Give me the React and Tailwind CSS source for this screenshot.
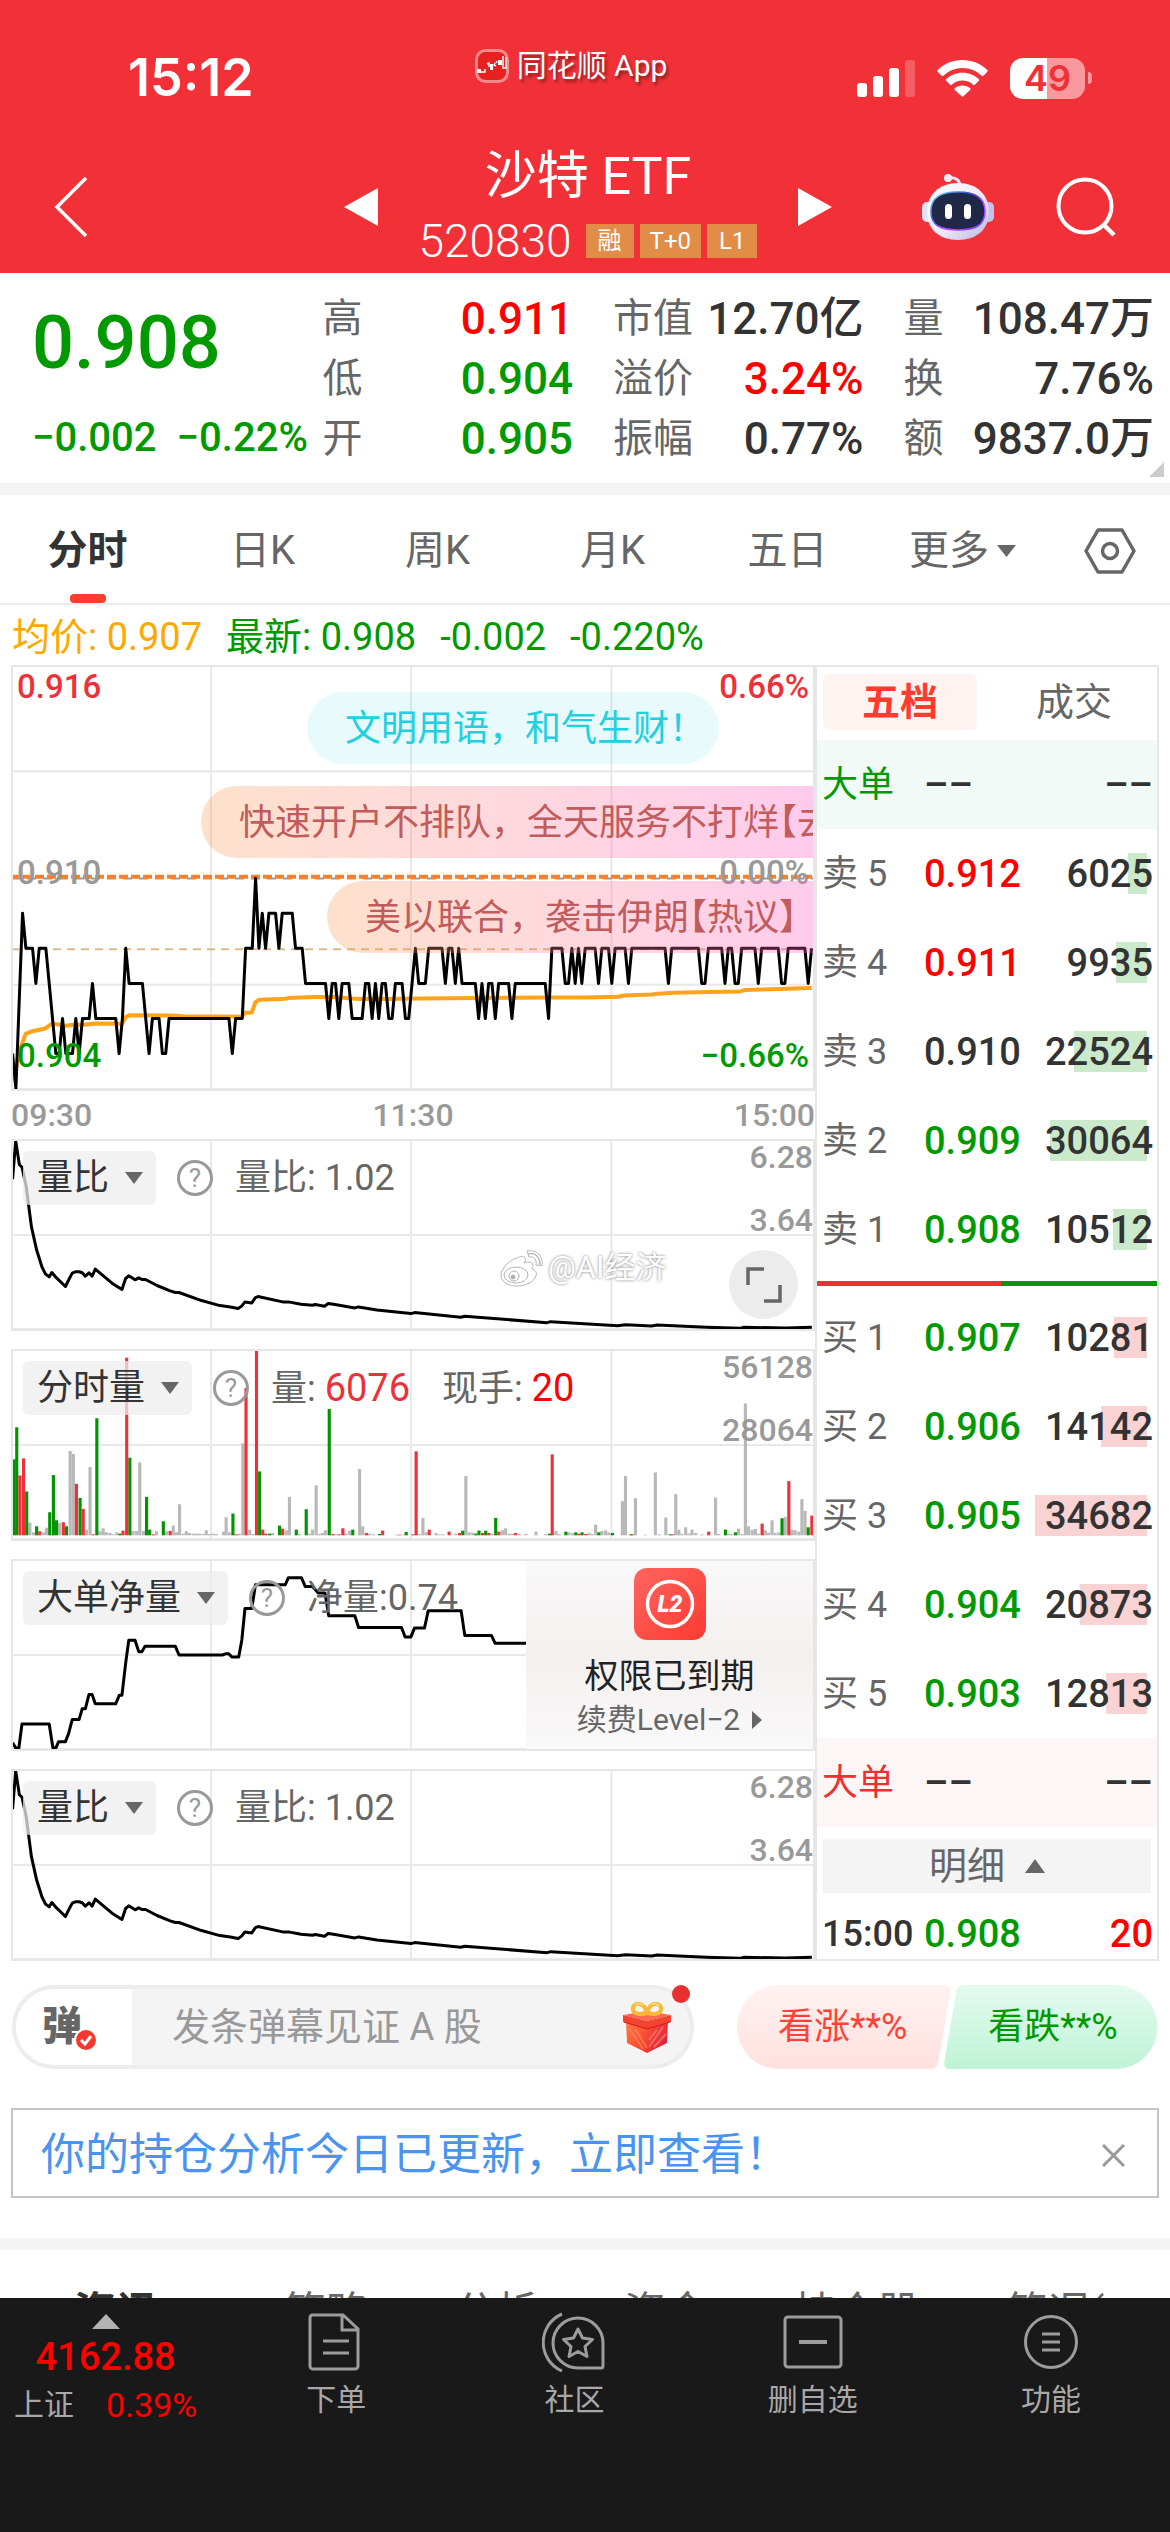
import { Fragment } from "react";

const PRICE_TICKS =
  "0:5 1:4 3:9 4:8 6:8 7:7 8:8 10:8 11:7 13:5 14:5 15:6 16:5 18:5 19:6 20:5 21:6 23:6 24:7 25:6 31:6 32:5 33:6 34:8 35:7 39:7 41:5 42:6 44:6 45:5 46:5 47:6 65:6 66:5 67:6 69:6 70:8 72:8 73:10 74:8 75:9 76:8 77:9 79:9 80:8 81:9 84:9 85:8 87:8 88:7 94:7 95:6 96:7 97:7 98:6 99:7 101:7 102:6 105:6 106:7 107:7 108:6 109:7 110:6 111:7 112:7 113:6 114:6 115:7 117:7 118:6 119:6 121:8 122:7 124:7 125:8 129:8 130:7 131:8 132:8 133:7 134:8 135:7 139:7 140:6 141:7 142:6 143:7 144:7 145:6 146:7 149:7 150:6 151:7 160:7 161:6 162:8 165:8 166:7 167:7 168:8 169:7 170:8 171:7 172:8 175:8 176:7 177:8 179:8 180:7 181:8 184:8 185:7 186:8 196:8 197:7 198:8 206:8 207:7 208:7 209:8 213:8 214:7 215:8 216:8 217:7 218:7 219:8 223:8 224:7 225:8 230:8 231:7 232:7 233:8 238:8 239:7 240:8";

const pricePoints = PRICE_TICKS.split(" ")
  .map((pair) => {
    const [minute, tick] = pair.split(":").map(Number);
    return `${24 + minute * 6.36},${684 + (10 - tick) * 105}`;
  })
  .join(" ");

const AVERAGE =
  "27,1290 33,1230 42,1180 49,1150 62,1142 86,1134 99,1120 112,1122 125,1126 144,1122 160,1123 182,1119 233,1120 240,1100 248,1094 330,1095 350,1097 440,1098 462,1099 468,1087 481,1086 488,1055 495,1048 540,1046 551,1043 600,1040 640,1040 670,1044 690,1046 720,1045 740,1046 800,1044 980,1042 1050,1041 1120,1041 1182,1039 1192,1035 1245,1032 1255,1030 1290,1027 1350,1025 1415,1023 1422,1019 1551,1013";

const RATIO =
  "24,178 30,64 37,135 42,142 50,200 60,320 70,390 80,440 87,462 94,470 99,457 106,470 125,499 131,480 138,459 144,455 151,455 157,458 163,468 170,458 176,468 182,447 214,489 233,508 240,475 246,467 258,479 265,473 271,478 278,478 300,496 325,512 335,517 342,517 385,541 420,556 440,560 455,565 462,557 468,545 481,548 488,532 493,529 540,545 551,545 575,552 597,555 602,553 620,558 627,550 640,553 678,563 685,560 720,569 785,580 792,577 880,591 888,588 1045,607 1052,604 1180,616 1195,613 1245,617 1255,614 1350,621 1415,624 1420,621 1500,623 1551,621";

const NET =
  "24,607 30,623 36,623 42,551 94,551 101,622 107,622 112,604 125,604 131,580 138,538 151,538 157,506 163,506 170,463 176,463 182,491 221,491 228,465 233,465 240,370 246,301 258,301 265,335 271,335 277,319 335,319 342,345 425,345 432,341 437,341 443,351 456,351 462,300 468,206 481,206 488,135 545,135 551,114 576,114 583,140 597,140 608,160 621,160 628,228 678,228 685,263 767,263 774,291 785,291 792,264 811,264 818,213 881,213 888,287 939,287 946,310 1006,310";

// x:height pairs, grouped by bar direction
const VOLUME = {
  "#b8b8b8":
    "57:38 64:9 83:9 89:23 114:37 134:252 140:243 165:17 172:204 191:12 197:21 203:9 210:7 216:3 223:9 254:13 261:13 267:218 274:13 299:12 318:12 331:29 337:9 343:93 350:5 356:12 362:7 369:5 375:5 381:5 388:4 394:15 400:4 407:5 413:4 427:11 432:54 438:9 457:5 464:275 477:17 483:4 521:7 547:15 553:115 572:4 591:5 597:17 604:149 610:4 616:7 622:15 642:3 661:5 668:14 687:198 693:27 706:5 713:3 757:2 770:2 801:4 808:52 814:9 833:7 839:3 846:3 871:5 890:177 896:9 903:8 941:4 960:15 966:21 973:5 979:4 992:4 1005:4 1024:11 1043:4 1062:13 1068:4 1087:9 1094:6 1125:7 1131:4 1138:32 1150:13 1157:15 1163:9 1189:102 1195:177 1214:111 1233:2 1252:188 1259:3 1272:53 1291:123 1297:17 1303:4 1310:24 1316:5 1322:17 1329:7 1341:3 1367:113 1373:4 1392:5 1398:4 1411:20 1418:4 1424:394 1430:27 1437:17 1443:19 1449:5 1462:15 1468:8 1475:45 1481:7 1488:9 1500:55 1513:17 1519:15 1526:11 1532:108 1538:73",
  "#009400":
    "27:227 32:323 51:131 70:27 95:69 102:180 108:45 127:27 153:112 185:350 229:5 248:232 280:115 286:17 312:42 445:65 496:191 515:5 534:29 566:17 585:78 629:378 674:17 725:4 776:10 884:14 909:5 915:14 928:14 947:52 1050:5 1081:11 1100:9 1112:9 1144:9 1170:7 1205:3 1280:3 1386:17 1405:9 1494:51 1544:24",
  "#ef3038":
    "38:179 45:230 76:12 121:39 146:154 159:79 178:3 235:14 242:531 293:3 325:13 451:3 470:440 490:555 502:17 508:5 540:20 636:4 648:3 655:21 700:7 731:14 763:2 789:3 795:251 820:17 858:11 878:7 922:7 934:7 953:11 985:7 1055:242 1106:5 1119:4 1208:3 1285:3 1354:11 1456:35 1507:162 1551:59",
};

const quotes = [
  [
    ["高", "0.911", "text-[#ff0000]"],
    ["低", "0.904", "text-[#009900]"],
    ["开", "0.905", "text-[#009900]"],
  ],
  [
    ["市值", "12.70亿", "text-[#333333]"],
    ["溢价", "3.24%", "text-[#ff0000]"],
    ["振幅", "0.77%", "text-[#333333]"],
  ],
  [
    ["量", "108.47万", "text-[#333333]"],
    ["换", "7.76%", "text-[#333333]"],
    ["额", "9837.0万", "text-[#333333]"],
  ],
];

const sells = [
  ["卖 5", "0.912", "6025", 19, "text-[#ff0000]"],
  ["卖 4", "0.911", "9935", 31, "text-[#ff0000]"],
  ["卖 3", "0.910", "22524", 73, "text-[#333333]"],
  ["卖 2", "0.909", "30064", 97, "text-[#009900]"],
  ["卖 1", "0.908", "10512", 34, "text-[#009900]"],
];

const buys = [
  ["买 1", "0.907", "10281", 33, "text-[#009900]"],
  ["买 2", "0.906", "14142", 46, "text-[#009900]"],
  ["买 3", "0.905", "34682", 112, "text-[#009900]"],
  ["买 4", "0.904", "20873", 67, "text-[#009900]"],
  ["买 5", "0.903", "12813", 41, "text-[#009900]"],
];

function AppLogo() {
  return (
    <svg width="34" height="34" viewBox="0 0 34 34" aria-hidden="true">
      <rect x="1.5" y="1.5" width="31" height="31" rx="9" fill="#e6211f" stroke="#f58a8c" strokeWidth="3" />
      <path d="M2 20h4v4H2zM15 15h3v6h-3zM23 11h4v5h-4z" fill="#fff" />
      <path d="M6 23h4v-3M12 15l2-1v4M28 7v12h3V8M20 14l-1 2 2 1M22 12l-1 2" stroke="#fff" strokeWidth="1.400" fill="none" />
    </svg>
  );
}

function StatusIcons() {
  return (
    <div className="flex items-center gap-[22px]">
      <svg width="58" height="38" viewBox="0 0 58 38" fill="#fff" aria-hidden="true">
        <rect x="0" y="24" width="10" height="14" rx="3" />
        <rect x="16" y="17" width="10" height="21" rx="3" />
        <rect x="32" y="9" width="10" height="29" rx="3" />
        <rect x="48" y="1" width="10" height="37" rx="3" opacity="0.22" />
      </svg>
      <svg width="51" height="38" viewBox="0 0 51 38" fill="#fff" aria-hidden="true">
        <path d="M25.500 1c9.500 0 18.400 3.500 24.800 10 .5.500.5 1.200 0 1.700l-3.900 4c-.5.500-1.200.5-1.700 0A27.500 27.500 0 0 0 25.500 9 27.500 27.500 0 0 0 6.300 16.700c-.5.500-1.200.5-1.700 0l-3.900-4c-.5-.5-.5-1.200 0-1.700C7.100 4.500 16 1 25.500 1z" />
        <path d="M25.500 13.700c6.300 0 12 2.400 16.300 6.300.5.500.5 1.200 0 1.700l-4 4c-.5.500-1.200.5-1.700 0a15.800 15.800 0 0 0-21.200 0c-.5.500-1.200.5-1.700 0l-4-4c-.5-.5-.5-1.200 0-1.700 4.300-3.900 10-6.300 16.300-6.300z" />
        <path d="M25.500 26.600c2.900 0 5.500 1 7.600 2.700.5.400.5 1.200.1 1.600l-6.900 6.400c-.5.500-1.100.5-1.600 0l-6.900-6.400c-.4-.5-.4-1.200.1-1.600 2.100-1.700 4.700-2.700 7.600-2.700z" />
      </svg>
      <div className="flex items-center gap-[3px]">
        <div className="flex h-[41px] w-[75px] items-center justify-center rounded-[13px] bg-linear-to-r from-white from-49% to-[#f8999d] to-49% text-4xl leading-none font-semibold text-[#f23038]">
          49
        </div>
        <div className="h-3 w-1 rounded-r-full bg-[#f8999d]" />
      </div>
    </div>
  );
}

function Robot() {
  return (
    <svg width="72" height="68" viewBox="0 0 72 68" aria-hidden="true">
      <defs>
        <linearGradient id="shell" x1="0" y1="0" x2="1" y2="1">
          <stop offset="0" stopColor="#ffffff" />
          <stop offset="0.55" stopColor="#eceaf8" />
          <stop offset="1" stopColor="#b9b5e0" />
        </linearGradient>
        <linearGradient id="rim" x1="0" y1="0" x2="1" y2="1">
          <stop offset="0" stopColor="#5fe6ff" />
          <stop offset="0.35" stopColor="#3558c8" />
          <stop offset="0.65" stopColor="#c445ff" />
          <stop offset="1" stopColor="#5a4bff" />
        </linearGradient>
      </defs>
      <path d="M26 5c8-1 12 2 12 9" fill="none" stroke="#e6e4f6" strokeWidth="3" />
      <circle cx="26" cy="5" r="4" fill="#f1effb" />
      <rect x="0" y="29" width="11" height="20" rx="5" fill="#e4e2f4" />
      <rect x="61" y="29" width="11" height="20" rx="5" fill="#c4c1ea" />
      <path d="M36 10C17 10 5 22 5 39s12 28 31 28 31-11 31-28-12-29-31-29z" fill="url(#shell)" />
      <path d="M36 19c-17 0-27 5-27 19s9 19 27 19 27-5 27-19-10-19-27-19z" fill="#1f2847" stroke="url(#rim)" strokeWidth="1.600" />
      <rect x="23" y="31" width="7" height="15" rx="3.500" fill="#fff" />
      <rect x="42" y="31" width="7" height="15" rx="3.500" fill="#fff" />
    </svg>
  );
}

function Header() {
  return (
    <header className="relative bg-[#f23038] text-white">
      <div className="absolute inset-x-0 top-[46px] flex items-center justify-center gap-2 pr-7 text-[30px] leading-10 text-shadow-[2px_3px_3px_rgb(0_0_0/0.4)]">
        <AppLogo />
        <span>同花顺 App</span>
      </div>
      <div className="flex h-[140px] items-center justify-between pt-4 pr-[78px] pl-[128px] font-['Inter','Noto_Sans_CJK_SC',sans-serif]">
        <span className="text-[52px] leading-none font-semibold">15:12</span>
        <StatusIcons />
      </div>
      <div className="grid h-[133px] grid-cols-[1fr_488px_1fr] items-center pl-1.5">
        <div className="pl-12">
          <button aria-label="返回" className="block">
            <svg width="34" height="60" viewBox="0 0 34 60" fill="none" stroke="#fff" strokeWidth="3.500" aria-hidden="true">
              <path d="M32 1 3 30l29 29" />
            </svg>
          </button>
        </div>
        <div className="flex items-center justify-between">
          <button aria-label="上一只">
            <svg width="34" height="38" viewBox="0 0 34 38" fill="#fff" aria-hidden="true">
              <path d="M34 0v38L0 19z" />
            </svg>
          </button>
          <div className="flex flex-col items-center gap-2">
            <h1 className="text-[52px] leading-[60px]">沙特 ETF</h1>
            <div className="flex items-center gap-1.5 text-2xl leading-[34px]">
              <span className="mr-2 text-[46px] leading-[52px] font-light">520830</span>
              <span className="bg-[#e28d47] px-3">融</span>
              <span className="bg-[#e28d47] px-2.5">T+0</span>
              <span className="bg-[#e28d47] px-3">L1</span>
            </div>
          </div>
          <button aria-label="下一只">
            <svg width="34" height="38" viewBox="0 0 34 38" fill="#fff" aria-hidden="true">
              <path d="M0 0v38l34-19z" />
            </svg>
          </button>
        </div>
        <div className="flex items-center justify-end gap-[62px] pr-[54px]">
          <button aria-label="智能助手">
            <Robot />
          </button>
          <button aria-label="搜索">
            <svg width="60" height="60" viewBox="0 0 60 60" fill="none" stroke="#fff" strokeWidth="4" aria-hidden="true">
              <circle cx="29" cy="29" r="26.500" />
              <path d="m47 47 11 11" strokeWidth="4.500" />
            </svg>
          </button>
        </div>
      </div>
    </header>
  );
}

function Summary() {
  return (
    <section className="relative grid grid-cols-4 gap-x-10 pt-4 pr-4 pb-3.5 pl-8">
      <div className="flex flex-col justify-between whitespace-nowrap text-[#009900]">
        <div className="pt-3.5 text-[74px] leading-[80px] font-medium">0.908</div>
        <div className="flex gap-5 pb-1.5 text-[40px] leading-[50px] font-medium">
          <span>−0.002</span>
          <span>−0.22%</span>
        </div>
      </div>
      {quotes.map((column) => (
        <dl key={column[0][0]}>
          {column.map(([label, value, tone]) => (
            <div key={label} className="flex h-[60px] items-center justify-between whitespace-nowrap">
              <dt className="text-[40px] leading-none text-[#666666]">{label}</dt>
              <dd className={`text-[44px] leading-none font-medium ${tone}`}>{value}</dd>
            </div>
          ))}
        </dl>
      ))}
      <svg className="absolute right-1.5 bottom-1.5" width="15" height="15" viewBox="0 0 15 15" aria-hidden="true">
        <path d="M15 0v15H0z" fill="#cccccc" />
      </svg>
    </section>
  );
}

function PeriodTabs() {
  return (
    <nav className="grid grid-cols-[repeat(6,175fr)_120fr] border-b-2 border-[#ebebeb] pt-1 text-[40px] text-[#666666]">
      <button className="relative h-[104px] font-bold text-[#333333]">
        分时
        <span className="absolute bottom-0 left-1/2 h-[9px] w-9 -translate-x-1/2 rounded-sm bg-[#ff3b30]" />
      </button>
      <button>日K</button>
      <button>周K</button>
      <button>月K</button>
      <button>五日</button>
      <button className="flex items-center justify-center gap-2">
        更多
        <Caret className="h-3 w-[19px]" />
      </button>
      <button aria-label="设置" className="flex items-center justify-center">
        <svg width="52" height="46" viewBox="0 0 52 46" fill="none" stroke="#666" strokeWidth="3.500" aria-hidden="true">
          <path d="M14 2h24l12 21-12 21H14L2 23z" strokeLinejoin="round" />
          <circle cx="26" cy="23" r="7.500" />
        </svg>
      </button>
    </nav>
  );
}

function Caret({ className }) {
  return (
    <svg className={className} viewBox="0 0 18 12" preserveAspectRatio="none" fill="#666" aria-hidden="true">
      <path d="M0 0h18L9 12z" />
    </svg>
  );
}

function Grid({ top, height, rows }) {
  return (
    <g stroke="#e8e8e8" strokeWidth="2">
      {[403, 785, 1168].map((x) => (
        <line key={x} x1={x} x2={x} y1={top} y2={top + height} vectorEffect="non-scaling-stroke" />
      ))}
      {rows.map((y) => (
        <line key={y} x1="21" x2="1557" y1={y} y2={y} vectorEffect="non-scaling-stroke" />
      ))}
    </g>
  );
}

function Line({ points, color = "#000", width = 3, dash }) {
  return (
    <polyline
      points={points}
      fill="none"
      stroke={color}
      strokeWidth={width}
      strokeDasharray={dash}
      strokeLinejoin="round"
      vectorEffect="non-scaling-stroke"
    />
  );
}

function Plot({ viewBox, label, children }) {
  return (
    <svg
      className="absolute -top-0.5 -left-0.5 h-[calc(100%+4px)] w-[calc(100%+4px)]"
      viewBox={viewBox}
      preserveAspectRatio="none"
      aria-label={label}
    >
      {children}
    </svg>
  );
}

function Bubble({ className, children }) {
  return (
    <div className={`absolute h-[72px] rounded-l-full pl-[38px] text-4xl leading-[74px] whitespace-nowrap ${className}`}>
      {children}
    </div>
  );
}

function OpenBracket() {
  return <span className="[font-feature-settings:'halt']">【</span>;
}

function PriceChart() {
  return (
    <div className="relative h-[426px] overflow-hidden border-2 border-[#e6e6e6] text-[33px] leading-8 font-medium">
      <Plot viewBox="21 46 1536 1275" label="分时走势">
        <Grid top={46} height={1275} rows={[364, 1003, 1315]} />
        <Line points="21,685 1557,685" color="#999" width={2} dash="9 7" />
        <Line points="21,680 1557,680" color="#ff8022" width={4} dash="9 3" />
        <Line points="21,897 1557,897" color="#d9ba8c" width={2} dash="8 6" />
        <Line points={AVERAGE} color="#ffa31a" width={4} />
        <Line points={pricePoints} />
      </Plot>
      <span className="absolute top-1 left-1 text-[#ef3038]">0.916</span>
      <span className="absolute top-1 right-1 text-[#ef3038]">0.66%</span>
      <span className="absolute top-[190px] left-1 text-[#999999]">0.910</span>
      <span className="absolute top-[190px] right-1 text-[#999999]">0.00%</span>
      <span className="absolute bottom-[17px] left-1 text-[#009900]">0.904</span>
      <span className="absolute right-1 bottom-[17px] text-[#009900]">−0.66%</span>
      <div className="font-normal">
        <Bubble className="top-[25px] right-[94px] left-[294px] rounded-r-full bg-[#22cfe0]/10 text-[#22cfe0]">
          文明用语，和气生财！
        </Bubble>
        <Bubble className="top-[119px] right-0 left-[188px] bg-linear-to-r from-[#fa9b50]/30 to-[#ff50be]/30 text-[#c25b5b]">
          快速开户不排队，全天服务不打烊
          <OpenBracket />去
        </Bubble>
        <Bubble className="top-[214px] right-0 left-[314px] bg-linear-to-r from-[#fa9b50]/30 to-[#ff50be]/30 text-[#c25b5b]">
          美以联合，袭击伊朗
          <OpenBracket />
          热议】
        </Bubble>
      </div>
    </div>
  );
}

function IndicatorPanel({ name, scale = [], readout, drawing, children }) {
  return (
    <div className="relative h-48 overflow-hidden border-2 border-[#e6e6e6]">
      <Plot viewBox="21 58 1536 574" label={name}>
        <Grid top={58} height={574} rows={[345, 626]} />
        {drawing}
      </Plot>
      <div className="relative flex items-center pt-2.5 pl-2.5 text-4xl text-[#666666]">
        <div className="relative">
          <select aria-label="指标" className="block h-[54px] appearance-none rounded-md bg-[#eeeeee]/75 pr-[46px] pl-3.5 text-[#333333]">
            <option>{name}</option>
          </select>
          <Caret className="pointer-events-none absolute top-[21px] right-[13px] h-3 w-[18px]" />
        </div>
        <button
          aria-label={`${name}说明`}
          className="mr-[22px] ml-[21px] h-9 w-9 rounded-full border-[3px] border-[#999999] text-[26px] leading-[30px] text-[#999999]"
        >
          ?
        </button>
        <span className="flex gap-8">{readout}</span>
      </div>
      {scale.length > 0 && (
        <div className="absolute top-0 right-0 text-right text-[32px] leading-8 font-medium text-[#999999]">
          <div>{scale[0]}</div>
          <div className="mt-[31px]">{scale[1]}</div>
        </div>
      )}
      {children}
    </div>
  );
}

function Watermark() {
  return (
    <div className="absolute top-[107px] left-[487px] flex items-center gap-1 text-[31px] leading-10 text-white text-shadow-[0_0_3px_rgb(0_0_0/0.55)]">
      <svg width="44" height="38" viewBox="0 0 44 38" fill="#fff" stroke="#b5b5b5" strokeWidth="1" aria-hidden="true">
        <path d="M17 9c3-2 7-2 8 0s0 4-1 5c5-2 9-1 9 2 0 2-2 3-1 4 4 1 5 4 4 7-2 6-10 10-19 10S1 33 1 26C1 19 11 10 17 9z" />
        <ellipse cx="16" cy="26" rx="12" ry="8" fill="none" />
        <circle cx="14" cy="27" r="5" fill="none" />
        <circle cx="13" cy="28" r="2" fill="#aaa" />
        <path d="M29 8c5-1 8 3 7 8l3 1c2-8-4-14-11-12zM27 2c9-2 17 5 15 15l-2-1C41 8 35 3 28 5z" />
      </svg>
      @AI经济
    </div>
  );
}

function Charts() {
  return (
    <div className="min-w-0">
      <PriceChart />
      <div className="flex h-12 items-center justify-between text-[32px] leading-none font-medium text-[#999999]">
        <span>09:30</span>
        <span>11:30</span>
        <span>15:00</span>
      </div>
      <div className="flex flex-col gap-[18px]">
        <IndicatorPanel name="量比" scale={["6.28", "3.64"]} readout="量比: 1.02" drawing={<Line points={RATIO} />}>
          <Watermark />
          <button
            aria-label="全屏"
            className="absolute right-[15px] bottom-2.5 flex h-[69px] w-[69px] items-center justify-center rounded-full bg-[#ececec]"
          >
            <svg width="36" height="36" viewBox="0 0 36 36" fill="none" stroke="#666" strokeWidth="3.500" aria-hidden="true">
              <path d="M2 18V2h16M34 18v16H18" />
            </svg>
          </button>
        </IndicatorPanel>
        <IndicatorPanel
          name="分时量"
          scale={["56128", "28064"]}
          readout={
            <>
              <span>
                量: <span className="text-[38px] text-[#ef3038]">6076</span>
              </span>
              <span>
                现手: <span className="text-[38px] text-[#ff0000]">20</span>
              </span>
            </>
          }
          drawing={Object.entries(VOLUME).map(([color, bars]) => (
            <g key={color} fill={color}>
              {bars.split(" ").map((bar) => {
                const [x, h] = bar.split(":").map(Number);
                return <rect key={x} x={x - 3} y={615 - h} width="6" height={h} />;
              })}
            </g>
          ))}
        />
        <IndicatorPanel name="大单净量" readout="净量:0.74" drawing={<Line points={NET} />}>
          <div className="absolute inset-y-0 right-0 flex w-[287px] flex-col items-center bg-linear-to-b from-[#f9f9f9] via-[#f4f0ef] to-[#f9f9f9] pt-[7px]">
            <svg width="72" height="72" viewBox="0 0 72 72" aria-hidden="true">
              <defs>
                <linearGradient id="level" x1="0" y1="0" x2="1" y2="1">
                  <stop offset="0" stopColor="#ff6560" />
                  <stop offset="1" stopColor="#fc3a31" />
                </linearGradient>
              </defs>
              <rect width="72" height="72" rx="13" fill="url(#level)" />
              <circle cx="36" cy="36" r="22.500" fill="none" stroke="#fff" strokeWidth="3.500" />
              <text x="36" y="44" textAnchor="middle" fill="#fff" fontSize="23" fontWeight="900" fontStyle="italic">
                L2
              </text>
            </svg>
            <div className="mt-3 text-[34px] leading-[48px] text-[#222222]">权限已到期</div>
            <a href="#level2" className="flex items-center gap-3 text-[30px] leading-10 text-[#666666]">
              续费Level−2
              <svg width="10" height="18" viewBox="0 0 10 18" fill="#666" aria-hidden="true">
                <path d="M0 0v18l10-9z" />
              </svg>
            </a>
          </div>
        </IndicatorPanel>
        <IndicatorPanel name="量比" scale={["6.28", "3.64"]} readout="量比: 1.02" drawing={<Line points={RATIO} />} />
      </div>
    </div>
  );
}

function BookRows({ rows, barClass }) {
  return rows.map(([label, price, volume, width, tone]) => (
    <tr key={label} className="h-[89px]">
      <th scope="row" className="w-[107px] pl-[5px] text-left text-4xl font-normal text-[#666666]">
        {label}
      </th>
      <td className={tone}>{price}</td>
      <td className="relative pr-1 text-right text-[#333333]">
        <span className={`absolute top-6 right-2.5 h-[41px] ${barClass}`} style={{ width }} />
        <span className="relative">{volume}</span>
      </td>
    </tr>
  ));
}

function BigOrderRow({ className }) {
  return (
    <tr className={`h-[89px] ${className}`}>
      <th scope="row" className="w-[107px] pl-[5px] text-left text-4xl font-normal">
        大单
      </th>
      <td className="text-[#333333]">––</td>
      <td className="pr-1 text-right text-[#333333]">––</td>
    </tr>
  );
}

function OrderBook() {
  return (
    <aside className="flex flex-col border-2 border-[#e6e6e6] text-[38px] leading-none font-medium">
      <div className="flex px-1.5 pt-[7px] pb-2.5 text-[38px]">
        <button className="h-14 flex-1 rounded-md bg-[#fff3f2] font-bold text-[#ff3b30]">五档</button>
        <button className="h-14 flex-1 pl-5 font-normal text-[#666666]">成交</button>
      </div>
      <table className="w-full table-fixed">
        <tbody>
          <BigOrderRow className="bg-[#f1faf6] text-[#009900]" />
          <BookRows rows={sells} barClass="bg-[#cbe9cb]" />
        </tbody>
      </table>
      <div className="my-[7px] h-[5px] bg-linear-to-r from-[#ef3038] from-54% to-[#009900] to-54%" />
      <table className="w-full table-fixed">
        <tbody>
          <BookRows rows={buys} barClass="bg-[#f9d3d3]" />
          <BigOrderRow className="bg-[#fdf6f6] text-[#ef3030]" />
        </tbody>
      </table>
      <button className="mx-1.5 mt-3 flex h-[54px] items-center justify-center gap-5 bg-[#f4f4f4] font-normal text-[#666666]">
        明细
        <Caret className="h-3.5 w-5 rotate-180" />
      </button>
      <div className="flex flex-1 items-center pt-4 pr-1 pl-[5px]">
        <span className="w-[102px] text-4xl leading-none text-[#333333]">15:00</span>
        <span className="text-[#009900]">0.908</span>
        <span className="ml-auto text-[#ff0000]">20</span>
      </div>
    </aside>
  );
}

function Gift() {
  return (
    <svg width="48" height="52" viewBox="0 0 48 52" aria-hidden="true">
      <defs>
        <linearGradient id="giftLeft" x1="0" y1="0" x2="1" y2="1">
          <stop offset="0" stopColor="#ff7a45" />
          <stop offset="1" stopColor="#f23a28" />
        </linearGradient>
        <linearGradient id="giftRight" x1="0" y1="0" x2="1" y2="1">
          <stop offset="0" stopColor="#ff5538" />
          <stop offset="1" stopColor="#d8123e" />
        </linearGradient>
      </defs>
      <path d="M3 20l21 7v25L4 42z" fill="url(#giftLeft)" />
      <path d="M45 20l-21 7v25l20-10z" fill="url(#giftRight)" />
      <path d="M6 27l14 21M12 28l12 19M40 26L26 46M34 29l-8 10M43 33L31 46" stroke="#ff8a66" strokeWidth="2" opacity="0.6" />
      <path d="M0 14l24-4 24 4-24 6z" fill="#ff6a50" />
      <path d="M0 14l24 6v8L0 21zM48 14l-24 6v8l24-7z" fill="#f4432e" />
      <path d="M1 21l23 7 23-7" stroke="#c4201c" strokeWidth="1" fill="none" />
      <g fill="none" stroke="#f9b934" strokeWidth="4">
        <path d="M24 12c-6 2-13 1-14-3s3-7 7-6 6 5 7 9z" />
        <path d="M24 12c6 2 13 1 14-3s-3-7-7-6-6 5-7 9z" />
      </g>
      <path d="M12 5c2-3 5-3 8-1M28 4c3-2 6-2 8 1" fill="none" stroke="#ffe08a" strokeWidth="1.500" />
    </svg>
  );
}

function Barrage() {
  return (
    <section className="flex gap-[43px] px-3 pt-6">
      <form className="relative flex h-[84px] min-w-0 flex-[680] items-center rounded-full border-4 border-[#ededed] bg-[#f4f4f4]">
        <button
          type="button"
          aria-label="弹幕开关"
          className="relative h-full w-[116px] shrink-0 rounded-l-full bg-white pr-6 text-[40px] leading-none font-black text-[#666666]"
        >
          弹
          <svg className="absolute top-[39px] left-[58px]" width="24" height="24" viewBox="0 0 24 24" aria-hidden="true">
            <circle cx="12" cy="12" r="11" fill="#f5392f" stroke="#fff" strokeWidth="2" />
            <path d="m7 12 4 4 6-8" fill="none" stroke="#fff" strokeWidth="3" />
          </svg>
        </button>
        <input
          aria-label="发弹幕"
          placeholder="发条弹幕见证 A 股"
          className="min-w-0 flex-1 bg-transparent pl-10 text-[38px] outline-none placeholder:text-[#999999]"
        />
        <button type="button" aria-label="礼物" className="mr-[19px] shrink-0">
          <Gift />
        </button>
        <span className="absolute -top-1 right-0 h-[18px] w-[18px] rounded-full bg-[#e93030]" />
      </form>
      <div className="relative flex min-w-0 flex-[424]">
        <svg className="absolute inset-0 h-full w-full" viewBox="0 0 424 84" preserveAspectRatio="none" aria-hidden="true">
          <defs>
            <linearGradient id="up" x1="0" y1="0" x2="0" y2="1">
              <stop offset="0" stopColor="#fff2f1" />
              <stop offset="1" stopColor="#ffe1df" />
            </linearGradient>
            <linearGradient id="down" x1="0" y1="0" x2="0" y2="1">
              <stop offset="0" stopColor="#e4fbf0" />
              <stop offset="1" stopColor="#bff3d6" />
            </linearGradient>
          </defs>
          <path d="M42 0h167q7 0 6 7l-12 70q-1 7-8 7H42a42 42 0 0 1 0-84z" fill="url(#up)" />
          <path d="M228 0h154a42 42 0 0 1 0 84H215q-7 0-6-7l12-70q1-7 7-7z" fill="url(#down)" />
        </svg>
        <button className="relative flex-1 text-4xl text-[#ff4238]">看涨**%</button>
        <button className="relative flex-1 text-4xl text-[#009900]">看跌**%</button>
      </div>
    </section>
  );
}

function Notice() {
  return (
    <section className="mx-[11px] mt-[39px] mb-10 flex h-[90px] items-center justify-between border-2 border-[#c4c4c4] pt-1 pr-8 pl-7">
      <a href="#position" className="text-[44px] leading-none text-[#4a94ef]">
        你的持仓分析今日已更新，立即查看！
      </a>
      <button aria-label="关闭">
        <svg width="23" height="23" viewBox="0 0 23 23" stroke="#999" strokeWidth="3" aria-hidden="true">
          <path d="m1 1 21 21M22 1 1 22" />
        </svg>
      </button>
    </section>
  );
}

function NavIcon({ children }) {
  return (
    <svg width="64" height="60" viewBox="0 0 64 60" fill="none" stroke="#9c9c9c" strokeWidth="3" aria-hidden="true">
      {children}
    </svg>
  );
}

const actions = [
  [
    "下单",
    <Fragment key="order">
      <path d="M8 3h31l15 14v37a3 3 0 0 1-3 3H9a3 3 0 0 1-3-3V6a3 3 0 0 1 2-3zM38 3v15h16" />
      <path d="M19 29h26M19 41h26" />
    </Fragment>,
  ],
  [
    "社区",
    <Fragment key="community">
      <path d="M36 6a25 25 0 1 0 0 50h23a2 2 0 0 0 2-2V31A25 25 0 0 0 36 6z" />
      <path d="M20 2a31 31 0 0 0 0 57" />
      <path d="m36 17 4.500 9 10 1.500-7.500 7 2 10-9-5-9 5 2-10-7.500-7 10-1.500z" strokeLinejoin="round" />
    </Fragment>,
  ],
  [
    "删自选",
    <Fragment key="remove">
      <rect x="4" y="5" width="56" height="50" rx="3" />
      <path d="M18 30h28" strokeWidth="4" />
    </Fragment>,
  ],
  [
    "功能",
    <Fragment key="features">
      <circle cx="32" cy="30" r="25.500" />
      <path d="M23 22h18M23 30h18M23 38h18" />
    </Fragment>,
  ],
];

function BottomBar() {
  return (
    <nav className="grid flex-1 grid-cols-[217fr_repeat(4,238fr)] bg-[#191919] pb-[116px] text-[30px] leading-9 text-[#a8a8a8]">
      <button className="flex flex-col items-center pt-4 pr-1.5 whitespace-nowrap">
        <svg width="28" height="15" viewBox="0 0 28 15" fill="#b3b3b3" aria-hidden="true">
          <path d="M14 0l14 15H0z" />
        </svg>
        <span className="mt-2 text-[38px] leading-10 font-medium text-[#ff0000]">4162.88</span>
        <span className="mt-2.5 flex items-center gap-8">
          上证
          <span className="text-[34px] text-[#ff0000]">0.39%</span>
        </span>
      </button>
      {actions.map(([label, icon]) => (
        <button key={label} className="flex flex-col items-center gap-2.5 pt-3.5">
          <NavIcon>{icon}</NavIcon>
          {label}
        </button>
      ))}
    </nav>
  );
}

export default function App() {
  return (
    <div className="flex min-h-screen flex-col overflow-hidden bg-white font-['Roboto','Noto_Sans_CJK_SC',sans-serif]">
      <Header />
      <Summary />
      <div className="h-3 bg-[#f4f4f4]" />
      <PeriodTabs />
      <div className="flex h-[60px] items-center gap-6 px-3 pt-1 text-[38px] leading-none whitespace-nowrap text-[#009900]">
        <span className="text-[#ffa800]">均价: 0.907</span>
        <span>最新: 0.908</span>
        <span>-0.002</span>
        <span>-0.220%</span>
      </div>
      <main className="grid grid-cols-[804fr_344fr] px-[11px]">
        <Charts />
        <OrderBook />
      </main>
      <Barrage />
      <Notice />
      <div className="h-3 bg-[#f4f4f4]" />
      <div className="flex h-12 gap-[86px] overflow-hidden pt-[42px] pl-[74px] text-[42px] leading-none whitespace-nowrap text-[#666666]">
        <button className="mr-10 font-bold text-[#333333]">资讯</button>
        <button>策略</button>
        <button>分析</button>
        <button>资金</button>
        <button>持仓股</button>
        <button>简况(</button>
      </div>
      <BottomBar />
    </div>
  );
}
